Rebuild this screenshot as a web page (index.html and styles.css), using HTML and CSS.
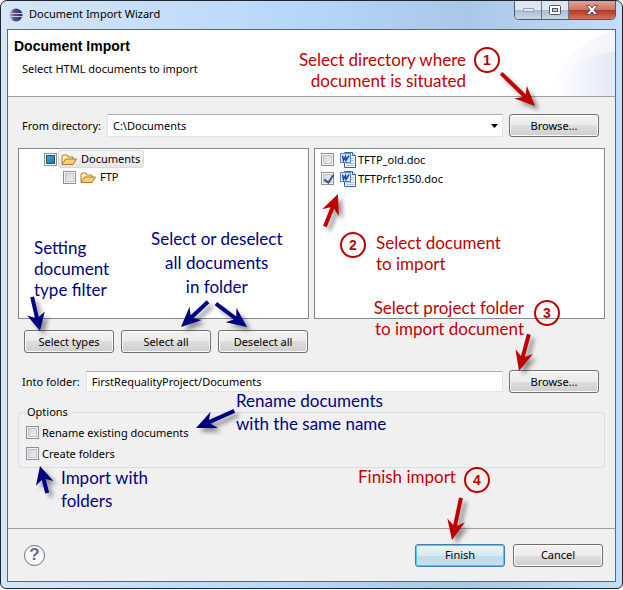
FILE: index.html
```html
<!DOCTYPE html>
<html lang="en">
<head>
    <meta charset="UTF-8">
    <meta name="viewport" content="width=device-width, initial-scale=1.0">
    <title>Document Import Wizard</title>
    <link rel="stylesheet" href="styles.css">
</head>
<body>

    <div class="window">

        <div class="titlebar">
            <svg class="logo" width="14" height="14" viewBox="0 0 14 14">
                <defs>
                    <linearGradient id="ball" x1="0" y1="0" x2="1" y2="0">
                        <stop offset="0" stop-color="#e3b3bd"/>
                        <stop offset="0.35" stop-color="#5a548f"/>
                        <stop offset="1" stop-color="#2c2560"/>
                    </linearGradient>
                </defs>
                <circle cx="7" cy="7" r="6.5" fill="url(#ball)"/>
                <path d="M1 5.500h13M1 8.500h13" stroke="#c3cdec" stroke-width="1"/>
            </svg>
            <span class="title">Document Import Wizard</span>
            <div class="controls">
                <button class="ctl min" aria-label="Minimize">
                    <svg width="13" height="6"><rect x="1.5" y="1.5" width="10" height="3" fill="#dfe6ec" stroke="#9aa5b1"/></svg>
                </button>
                <button class="ctl max" aria-label="Maximize">
                    <svg width="12" height="10"><rect x="0.5" y="0.5" width="11" height="9" rx="1" fill="#fff" stroke="#535666"/><rect x="3.5" y="3.5" width="5" height="3" fill="#bccbdc" stroke="#535666"/></svg>
                </button>
                <button class="ctl close" aria-label="Close">
                    <svg width="12" height="10" viewBox="0 0 12 10"><path d="M.5.5h3.200L6 3 8.300.5h3.200L8 5l3.500 4.500H8.300L6 7 3.700 9.500H.5L4 5z" fill="#fff" stroke="#535666"/></svg>
                </button>
            </div>
        </div>

        <div class="dialog">

            <div class="header">
                <svg class="swoosh" width="90" height="66" viewBox="0 0 90 66">
                    <defs>
                        <linearGradient id="fade" x1="0" y1="0" x2="1" y2="0">
                            <stop offset="0" stop-color="#fff"/>
                            <stop offset="1" stop-color="#e4e9f7"/>
                        </linearGradient>
                    </defs>
                    <path d="M20 66Q42 14 90 0V66z" fill="url(#fade)" opacity="0.5"/>
                    <path d="M30 66Q46 24 90 22V66z" fill="url(#fade)"/>
                </svg>
                <h1>Document Import</h1>
                <p>Select HTML documents to import</p>
            </div>

            <div class="content">

                <div class="row from">
                    <label for="from">From directory:</label>
                    <div class="combo">
                        <select id="from">
                            <option>C:\Documents</option>
                        </select>
                        <svg width="7" height="4"><path d="M0 0h7L3.500 4z"/></svg>
                    </div>
                    <button class="btn">Browse...</button>
                </div>

                <div class="lists">
                    <div class="list tree">
                        <div class="item">
                            <input type="checkbox" id="docs" class="partial">
                            <label for="docs" class="selected">
                                <svg class="folder" width="16" height="14" viewBox="0 0 16 14"><use href="#folder"/></svg>
                                Documents
                            </label>
                        </div>
                        <div class="item child">
                            <input type="checkbox" id="ftp">
                            <label for="ftp">
                                <svg class="folder" width="16" height="14" viewBox="0 0 16 14">
                                    <g id="folder" stroke="#b1792c" stroke-linejoin="round">
                                        <path d="M1 12V4l1-1h4l1 2h5v3" fill="#fff0b8"/>
                                        <path d="M1 12.500L4.500 7h11L12 12.500z" fill="#f8cf76"/>
                                    </g>
                                </svg>
                                FTP
                            </label>
                        </div>
                    </div>
                    <div class="list files">
                        <div class="item">
                            <input type="checkbox" id="old">
                            <label for="old">
                                <svg class="doc" width="16" height="16" viewBox="0 0 16 16"><use href="#doc"/></svg>
                                TFTP_old.doc
                            </label>
                        </div>
                        <div class="item">
                            <input type="checkbox" id="rfc" checked>
                            <label for="rfc">
                                <svg class="doc" width="16" height="16" viewBox="0 0 16 16">
                                    <g id="doc">
                                        <path d="M4.500.5h8l3 3v12h-11z" fill="#eef4ff" stroke="#3563b5"/>
                                        <path d="M12.500.5v3h3" fill="#fff" stroke="#3563b5"/>
                                        <path d="M11 6.500h3M11 8.500h3M6 11.500h8M6 13.500h8" stroke="#a9c3ee"/>
                                        <rect x="0.500" y="1.500" width="10" height="9" fill="#dce8fc" stroke="#5f86c8"/>
                                        <path d="M2.500 3.500l1 5 2-4 .5 4 3-5" fill="none" stroke="#1c479c" stroke-width="1.500"/>
                                    </g>
                                </svg>
                                TFTPrfc1350.doc
                            </label>
                        </div>
                    </div>
                </div>

                <div class="row actions">
                    <button class="btn">Select types</button>
                    <button class="btn">Select all</button>
                    <button class="btn">Deselect all</button>
                </div>

                <div class="row into">
                    <label for="into">Into folder:</label>
                    <input type="text" id="into" value="FirstRequalityProject/Documents">
                    <button class="btn">Browse...</button>
                </div>

                <fieldset>
                    <legend>Options</legend>
                    <div class="option">
                        <input type="checkbox" id="rename">
                        <label for="rename">Rename existing documents</label>
                    </div>
                    <div class="option">
                        <input type="checkbox" id="create">
                        <label for="create">Create folders</label>
                    </div>
                </fieldset>

            </div>

            <div class="footer">
                <button class="help" aria-label="Help">?</button>
                <button class="btn default">Finish</button>
                <button class="btn">Cancel</button>
            </div>

        </div>

        <!-- callouts drawn over the dialog -->
        <div class="note red n1">Select directory where<br>document is situated</div>
        <div class="note red n2">Select document<br>to import</div>
        <div class="note red n3">Select project folder<br>to import document</div>
        <div class="note red n4">Finish import</div>
        <div class="note blue n5">Setting<br>document<br>type filter</div>
        <div class="note blue n6">Select or deselect<br>all documents<br>in folder</div>
        <div class="note blue n7">Rename documents<br>with the same name</div>
        <div class="note blue n8">Import with<br>folders</div>

        <span class="num c1">1</span>
        <span class="num c2">2</span>
        <span class="num c3">3</span>
        <span class="num c4">4</span>

        <!-- each arrow points right with its tip at 0,0 and is then turned -->
        <svg class="arrows" width="623" height="590" viewBox="0 0 623 590">
            <g fill="#c00000">
                <path transform="translate(535 106) rotate(44)" d="M0 0L-20-9L-15-2H-47V2H-15L-20 9z"/>
                <path transform="translate(338 194) rotate(-68)" d="M0 0L-20-9L-15-2H-35V2H-15L-20 9z"/>
                <path transform="translate(519 371) rotate(105)" d="M0 0L-20-9L-15-2H-38V2H-15L-20 9z"/>
                <path transform="translate(452 540) rotate(102)" d="M0 0L-20-9L-15-2H-43V2H-15L-20 9z"/>
            </g>
            <g fill="#000080">
                <path transform="translate(40 331) rotate(77)" d="M0 0L-18-9L-14-2H-35V2H-14L-18 9z"/>
                <path transform="translate(181 327) rotate(137)" d="M0 0L-20-9L-15-2H-37V2H-15L-20 9z"/>
                <path transform="translate(247 327) rotate(37)" d="M0 0L-20-9L-15-2H-39V2H-15L-20 9z"/>
                <path transform="translate(196 428) rotate(156)" d="M0 0L-20-9L-15-2H-42V2H-15L-20 9z"/>
                <path transform="translate(40 466) rotate(-105)" d="M0 0L-18-9L-14-2H-28V2H-14L-18 9z"/>
            </g>
        </svg>

    </div>

</body>
</html>
```

FILE: styles.css
```css
* {
    box-sizing: border-box;
}

body {
    margin: 0;
    background: #fff;
    font: 11px/16px "Noto Sans", sans-serif;
    color: #000;
}

button, input, select {
    font: inherit;
    color: inherit;
    margin: 0;
}

.window {
    position: relative;
    padding: 0 6px 6px;
    border: 1px solid #20242c;
    border-radius: 7px 7px 6px 6px;
    background: linear-gradient(90deg, #d5e6f6, #b8d8fa 45%, #a9c8e8 75%, #c3def6);
}

.titlebar {
    display: flex;
    align-items: flex-start;
    height: 28px;
}

.logo {
    margin: 7px 6px 0 2px;
}

.title {
    margin-top: 5px;
}

.controls {
    display: flex;
    margin-left: auto;
    border: 1px solid #535666;
    border-top: none;
    border-radius: 0 0 5px 5px;
    overflow: hidden;
}

.ctl {
    display: flex;
    align-items: center;
    justify-content: center;
    width: 27px;
    height: 18px;
    padding: 0;
    border: none;
    border-right: 1px solid #6b7685;
    background: linear-gradient(#dce7f2 50%, #a9bccf 50%, #c8d9e8);
}

.ctl.close {
    width: 46px;
    border: none;
    background: linear-gradient(#e0a396, #cf7163 50%, #b93424 50%, #d5705c);
}

.dialog {
    border: 1px solid #5c6674;
    background: #f0f0f0;
}

.header {
    position: relative;
    height: 67px;
    padding: 7px 6px;
    border-bottom: 1px solid #a0a0a0;
    background: #fff;
}

.swoosh {
    position: absolute;
    right: 0;
    top: 0;
}

.header h1 {
    margin: 0;
    font: bold 14px/18px "Liberation Sans", sans-serif;
}

.header p {
    margin: 6px 8px;
}

.content {
    padding: 17px 10px 0;
}

.row {
    display: flex;
    align-items: center;
}

.from label, .into label {
    margin: 0 6px 0 4px;
}

.btn {
    width: 90px;
    height: 23px;
    padding: 0;
    border: 1px solid #707070;
    border-radius: 3px;
    background: linear-gradient(#f2f2f2, #ebebeb 50%, #dddddd 50%, #cfcfcf);
    box-shadow: inset 0 0 0 1px #fbfbfb;
}

.from .btn, .into .btn {
    margin: 0 6px;
}

.combo {
    position: relative;
    flex: 1;
}

.combo select {
    appearance: none;
    display: block;
    width: 100%;
    height: 23px;
    padding: 0 5px;
    border: 1px solid #e2e3ea;
    border-top-color: #abadb3;
    border-radius: 0;
    background: #fff;
}

.combo svg {
    position: absolute;
    right: 5px;
    top: 10px;
}

.lists {
    display: grid;
    grid-template-columns: 1fr 1fr;
    gap: 5px;
    margin-top: 11px;
}

.list {
    height: 171px;
    border: 1px solid #828790;
    background: #fff;
}

.tree {
    padding: 1px 0 0 25px;
}

.files {
    padding: 1px 0 0 6px;
}

.item {
    display: flex;
    align-items: center;
    height: 18px;
}

.files .item {
    height: 19px;
}

.item label {
    display: flex;
    align-items: center;
    height: 18px;
    padding: 0 3px 0 2px;
    margin-left: 1px;
    border: 1px solid transparent;
    border-radius: 3px;
}

.files label {
    padding-left: 4px;
}

.item label.selected {
    border-color: #d9d9d9;
    background: linear-gradient(#f8f8f8, #e5e5e5);
}

.child {
    margin-left: 19px;
}

.folder {
    margin-right: 4px;
}

.doc {
    margin-right: 2px;
}

input[type="checkbox"] {
    appearance: none;
    flex: none;
    width: 13px;
    height: 13px;
    border: 1px solid #8e8f8f;
    background: linear-gradient(135deg, #cbcfd5, #f6f6f6);
    box-shadow: inset 0 0 0 1px #f4f4f4, inset 0 0 0 2px #c0c4ca;
}

input[type="checkbox"].partial {
    background: linear-gradient(135deg, #4ab8dc, #0c6a9c);
    box-shadow: inset 0 0 0 1px #fff, inset 0 0 0 2px #1a4f78;
}

input[type="checkbox"]:checked::before {
    content: "";
    display: block;
    width: 4px;
    height: 8px;
    margin: 0 0 0 4px;
    border: solid #3a4f9c;
    border-width: 0 2px 2px 0;
    transform: rotate(35deg);
}

.actions {
    gap: 7px;
    margin: 11px 0 0 6px;
}

.into {
    margin-top: 17px;
}

.into input {
    flex: 1;
    min-width: 0;
    height: 21px;
    padding: 0 5px;
    border: 1px solid #e2e3ea;
    border-top-color: #abadb3;
}

fieldset {
    margin: 11px 0 0;
    padding: 2px 7px 3px;
    border: 1px solid #d5dfe5;
    border-radius: 4px;
}

legend {
    padding: 0 1px;
}

.option {
    display: flex;
    align-items: center;
    height: 21px;
}

.option label {
    margin-left: 3px;
}

.footer {
    display: flex;
    align-items: center;
    gap: 8px;
    height: 53px;
    margin-top: 60px;
    padding: 0 12px 0 16px;
    border-top: 1px solid #a0a0a0;
}

.help {
    width: 21px;
    height: 21px;
    margin-right: auto;
    padding: 0;
    border: 1px solid #5f6f86;
    border-radius: 50%;
    background: #f8f9fb;
    color: #5f6f86;
    font: bold 17px/18px "Liberation Sans", sans-serif;
}

.default {
    border-color: #3c7fb1;
    background: linear-gradient(#eaf3f8, #d9eaf3 50%, #c0dbe9 50%, #c8e0ec);
    box-shadow: inset 0 0 0 1px #46d0f8;
}

.note {
    position: absolute;
    font: 17px/21px Lato, sans-serif;
    white-space: nowrap;
}

.red {
    color: #c00000;
}

.blue {
    color: #000080;
}

.n1 {
    right: 156px;
    top: 48px;
    text-align: right;
}

.n2 {
    left: 375px;
    top: 231px;
}

.n3 {
    right: 98px;
    top: 296px;
    text-align: right;
}

.n4 {
    left: 357px;
    top: 465px;
}

.n5 {
    left: 33px;
    top: 236px;
}

.n6 {
    left: 150px;
    top: 226px;
    line-height: 24px;
    text-align: center;
}

.n7 {
    left: 235px;
    top: 388px;
    line-height: 23px;
}

.n8 {
    left: 60px;
    top: 465px;
    line-height: 23px;
}

.num {
    position: absolute;
    width: 26px;
    height: 26px;
    border: 2px solid #c00000;
    border-radius: 50%;
    color: #c00000;
    font: bold 14px/22px "Liberation Sans", sans-serif;
    text-align: center;
}

.c1 {
    left: 473px;
    top: 46px;
}

.c2 {
    left: 339px;
    top: 231px;
}

.c3 {
    left: 533px;
    top: 299px;
}

.c4 {
    left: 463px;
    top: 466px;
}

.arrows {
    position: absolute;
    left: -1px;
    top: -1px;
    pointer-events: none;
    filter: drop-shadow(4px 4px 2px #00000066);
}
```
